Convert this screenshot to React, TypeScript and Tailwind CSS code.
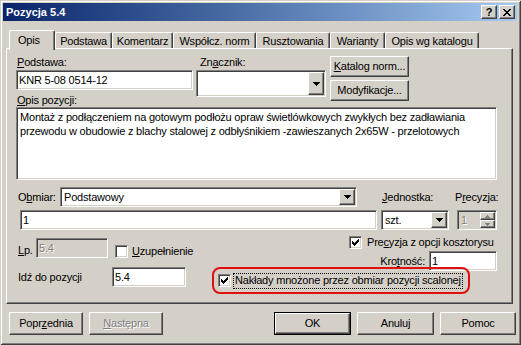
import React from "react";

const RAISED =
  "border border-t-white border-l-white border-r-[#404040] border-b-[#404040] shadow-[inset_-1px_-1px_0_#808080,inset_1px_1px_0_#d4d0c8] bg-[#d4d0c8]";
const SUNKEN =
  "border border-t-[#808080] border-l-[#808080] border-r-white border-b-white shadow-[inset_1px_1px_0_#404040,inset_-1px_-1px_0_#d4d0c8]";
const DIS = "text-[#808080] [text-shadow:1px_1px_0_#ffffff]";

function Arrow({ gray }: { gray?: boolean }) {
  const f = gray ? "#808080" : "#000000";
  return (
    <svg width="7" height="4" viewBox="0 0 7 4" shapeRendering="crispEdges">
      <rect x="0" y="0" width="7" height="1" fill={f} />
      <rect x="1" y="1" width="5" height="1" fill={f} />
      <rect x="2" y="2" width="3" height="1" fill={f} />
      <rect x="3" y="3" width="1" height="1" fill={f} />
    </svg>
  );
}

function DropBtn() {
  return (
    <div className={`${RAISED} w-[16px] h-full shrink-0 flex items-center justify-center`}>
      <Arrow />
    </div>
  );
}

function Combo({ cls, text, top }: { cls: string; text?: string; top?: boolean }) {
  return (
    <div className={`${SUNKEN} bg-white flex p-[1px] ${cls}`}>
      <div className={`flex-1 pl-[2px] flex ${top ? "items-start pt-[2px]" : "items-center"} whitespace-nowrap`}>
        {text}
      </div>
      <DropBtn />
    </div>
  );
}

function Check({ checked }: { checked?: boolean }) {
  const cols = [2, 3, 4, 3, 2, 1, 0];
  return (
    <div className={`${SUNKEN} bg-white w-[13px] h-[13px] shrink-0 flex items-center justify-center`}>
      {checked && (
        <svg width="7" height="7" viewBox="0 0 7 7" shapeRendering="crispEdges">
          {cols.map((y, i) => (
            <rect key={i} x={i} y={y} width="1" height="3" fill="#000" />
          ))}
        </svg>
      )}
    </div>
  );
}

function Btn({ cls, children }: { cls: string; children: React.ReactNode }) {
  return (
    <div className={`${RAISED} flex items-center justify-center whitespace-nowrap ${cls}`}>{children}</div>
  );
}

function U({ children }: { children: React.ReactNode }) {
  return <span className="underline underline-offset-[1px]">{children}</span>;
}

const tabs = [
  { t: "Podstawa", w: "w-[57px]" },
  { t: "Komentarz", w: "w-[61px]" },
  { t: "Współcz. norm", w: "w-[83px]" },
  { t: "Rusztowania", w: "w-[74px]" },
  { t: "Warianty", w: "w-[55px]" },
  { t: "Opis wg katalogu", w: "w-[94px]" },
];

export default function App() {
  return (
    <div className="w-[521px] h-[345px] bg-[#d4d0c8] font-['Liberation_Sans',Arial,sans-serif] text-[11px] leading-[13px] tracking-[-0.2px] text-black overflow-hidden pt-[3px] pl-[3px] shadow-[inset_1px_1px_0_#d4d0c8,inset_-1px_-1px_0_#404040,inset_2px_2px_0_#ffffff,inset_-2px_-2px_0_#808080]">
      {/* Title bar */}
      <div className="w-[514px] h-[18px] bg-linear-to-r from-[#0a246a] to-[#a6caf0] flex items-center pl-[3px] pr-[2px]">
        <div className="flex-1 text-white font-bold tracking-normal text-[11px]">Pozycja 5.4</div>
        <div className={`${RAISED} w-[16px] h-[14px] flex items-center justify-center font-bold text-[11px] leading-[11px] tracking-normal`}>
          ?
        </div>
        <div className={`${RAISED} w-[16px] h-[14px] ml-[2px] flex items-center justify-center`}>
          <svg width="8" height="7" viewBox="0 0 8 7" shapeRendering="crispEdges">
            {[0, 1, 2, 3, 4, 5, 6].map((i) => (
              <g key={i}>
                <rect x={i} y={i} width="2" height="1" fill="#000" />
                <rect x={6 - i} y={i} width="2" height="1" fill="#000" />
              </g>
            ))}
          </svg>
        </div>
      </div>

      {/* Tabs */}
      <div className="relative z-10 mt-[9px] ml-[6px] h-[18px] flex items-end">
        <div className="w-[46px] h-[20px] mb-[-2px] bg-[#d4d0c8] border-t border-l border-white rounded-tl-[2px] rounded-tr-[2px] border-r border-r-[#404040] shadow-[inset_-1px_0_0_#808080] pl-[8px] pt-[3px]">
          Opis
        </div>
        {tabs.map((tb) => (
          <div
            key={tb.t}
            className={`${tb.w} h-[16px] border-t border-l border-white border-r border-r-[#404040] rounded-tl-[2px] rounded-tr-[2px] shadow-[inset_-1px_0_0_#808080] flex items-center justify-center pt-[1px] whitespace-nowrap`}
          >
            {tb.t}
          </div>
        ))}
      </div>

      {/* Panel */}
      <div className="ml-[3px] w-[507px] h-[256px] border border-t-white border-l-white border-r-[#404040] border-b-[#404040] shadow-[inset_-1px_-1px_0_#808080] pt-[7px] pl-[9px]">
        {/* Row 1 */}
        <div className="flex">
          <div className="w-[177px] flex flex-col">
            <div className="h-[13px] pl-[1px]">
              <U>P</U>odstawa:
            </div>
            <div className={`${SUNKEN} bg-white mt-[1px] h-[20px] pl-[2px] flex items-center`}>KNR 5-08 0514-12</div>
            <div className="h-[13px] mt-[4px] pl-[1px] whitespace-nowrap">
              <U>O</U>pis pozycji:
            </div>
          </div>
          <div className="w-[130px] ml-[3px] flex flex-col">
            <div className="h-[13px] pl-[4px]">
              Zn<U>a</U>cznik:
            </div>
            <Combo cls="mt-[1px] h-[27px]" />
          </div>
          <div className="w-[79px] ml-[4px] flex flex-col">
            <Btn cls="h-[21px]">
              <span>
                <U>K</U>atalog norm...
              </span>
            </Btn>
            <Btn cls="h-[21px] mt-[3px]">Modyfikacje...</Btn>
          </div>
        </div>

        {/* Opis textarea */}
        <div className={`${SUNKEN} bg-white w-[481px] h-[73px] pl-[3px] pt-[2px] leading-[14px]`}>
          <div className="whitespace-nowrap">
            Montaż z podłączeniem na gotowym podłożu opraw świetlówkowych zwykłych bez zadławiania
          </div>
          <div className="whitespace-nowrap">
            przewodu w obudowie z blachy stalowej z odbłyśnikiem -zawieszanych 2x65W - przelotowych
          </div>
        </div>

        {/* Obmiar row */}
        <div className="mt-[7px] h-[20px] flex items-center">
          <div className="w-[44px] pl-[2px]">
            O<U>b</U>miar:
          </div>
          <Combo cls="w-[297px] h-[20px]" text="Podstawowy" />
          <div className="ml-[25px] w-[73px]">
            <U>J</U>ednostka:
          </div>
          <div>
            P<U>r</U>ecyzja:
          </div>
        </div>

        {/* Value row */}
        <div className="mt-[3px] h-[20px] flex">
          <div className={`${SUNKEN} bg-white ml-[4px] w-[357px] h-[20px] pl-[2px] flex items-center`}>1</div>
          <Combo cls="ml-[4px] w-[68px] h-[20px]" text="szt." />
          <div className={`${SUNKEN} bg-[#d4d0c8] ml-[8px] w-[40px] h-[20px] flex p-[1px]`}>
            <div className={`flex-1 pl-[2px] flex items-center ${DIS}`}>1</div>
            <div className="w-[15px] flex flex-col">
              <div className={`${RAISED} h-[9px] flex items-center justify-center`}>
                <svg width="5" height="3" viewBox="0 0 5 3" shapeRendering="crispEdges">
                  <rect x="2" y="0" width="1" height="1" fill="#808080" />
                  <rect x="1" y="1" width="3" height="1" fill="#808080" />
                  <rect x="0" y="2" width="5" height="1" fill="#808080" />
                </svg>
              </div>
              <div className={`${RAISED} h-[9px] flex items-center justify-center`}>
                <svg width="5" height="3" viewBox="0 0 5 3" shapeRendering="crispEdges">
                  <rect x="0" y="0" width="5" height="1" fill="#808080" />
                  <rect x="1" y="1" width="3" height="1" fill="#808080" />
                  <rect x="2" y="2" width="1" height="1" fill="#808080" />
                </svg>
              </div>
            </div>
          </div>
        </div>

        {/* Lower area */}
        <div className="mt-[6px] flex">
          <div className="w-[196px] flex flex-col">
            <div className="mt-[2px] h-[20px] flex items-start">
              <div className="w-[20px] pl-[2px] mt-[6px]">
                <U>L</U>p.
              </div>
              <div className={`${SUNKEN} bg-[#d4d0c8] w-[72px] h-[20px] pl-[2px] flex items-center ${DIS}`}>5.4</div>
              <div className="ml-[7px] mt-[7px]">
                <Check />
              </div>
              <div className="ml-[4px] mt-[7px] whitespace-nowrap">
                <U>U</U>zupełnienie
              </div>
            </div>
            <div className="mt-[9px] h-[20px] flex items-center">
              <div className="w-[96px] pl-[2px]">Idź do pozycji</div>
              <div className={`${SUNKEN} bg-white w-[74px] h-[20px] pl-[2px] flex items-center`}>5.4</div>
            </div>
          </div>
          <div className="w-[285px] flex flex-col">
            <div className="h-[13px] flex items-center">
              <div className="ml-[137px]">
                <Check checked />
              </div>
              <div className="ml-[5px] whitespace-nowrap">
                Pre<U>c</U>yzja z opcji kosztorysu
              </div>
            </div>
            <div className="mt-[2px] h-[20px] flex items-center justify-end">
              <div>
                Kro<U>t</U>ność:
              </div>
              <div className={`${SUNKEN} bg-white ml-[4px] w-[68px] h-[20px] pl-[2px] flex items-center`}>1</div>
            </div>
            <div className="mt-[-4px] w-[258px] h-[27px] border-2 border-[#e01010] rounded-[8px] flex items-center pl-[4px]">
              <Check checked />
              <div className="ml-[2px] border border-dotted border-black px-[1px] h-[16px] flex items-center whitespace-nowrap">
                Nakłady mnożone przez obmiar pozycji scalonej
              </div>
            </div>
          </div>
        </div>
      </div>

      {/* Bottom buttons */}
      <div className="mt-[8px] flex">
        <Btn cls="ml-[6px] w-[74px] h-[23px]">
          <span>
            Popr<U>z</U>ednia
          </span>
        </Btn>
        <Btn cls="ml-[6px] w-[74px] h-[23px]">
          <span className={DIS}>
            <U>N</U>astępna
          </span>
        </Btn>
        <div className="ml-[111px] w-[77px] h-[23px] border border-black">
          <Btn cls="w-full h-full">OK</Btn>
        </div>
        <Btn cls="ml-[6px] w-[77px] h-[23px]">Anuluj</Btn>
        <Btn cls="ml-[6px] w-[76px] h-[23px]">Pomoc</Btn>
      </div>
    </div>
  );
}
